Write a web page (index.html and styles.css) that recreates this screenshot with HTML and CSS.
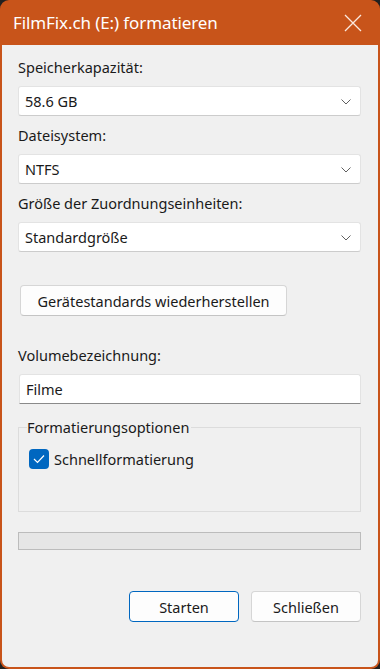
FILE: index.html
```html
<!DOCTYPE html>
<html lang="de">
<head>
  <meta charset="UTF-8">
  <meta name="viewport" content="width=device-width, initial-scale=1.0">
  <title>FilmFix.ch (E:) formatieren</title>
  <link rel="stylesheet" href="styles.css">
</head>
<body>

  <div class="window">
    <!-- Title bar -->
    <div class="titlebar">
      <span class="title">FilmFix.ch (E:) formatieren</span>
      <svg class="close" width="18" height="18" viewBox="0 0 18 18">
        <path d="M1 1 L17 17 M17 1 L1 17" stroke="#fbe9df" stroke-width="1.3" fill="none"/>
      </svg>
    </div>

    <div class="content">
      <label class="field-label">Speicherkapazität:</label>
      <div class="select">
        <span>58.6 GB</span>
        <svg class="chevron" width="10" height="6" viewBox="0 0 10 6"><path d="M0.5 0.5 L5 5 L9.5 0.5" stroke="#606060" stroke-width="1" fill="none"/></svg>
      </div>

      <label class="field-label">Dateisystem:</label>
      <div class="select">
        <span>NTFS</span>
        <svg class="chevron" width="10" height="6" viewBox="0 0 10 6"><path d="M0.5 0.5 L5 5 L9.5 0.5" stroke="#606060" stroke-width="1" fill="none"/></svg>
      </div>

      <label class="field-label">Größe der Zuordnungseinheiten:</label>
      <div class="select">
        <span>Standardgröße</span>
        <svg class="chevron" width="10" height="6" viewBox="0 0 10 6"><path d="M0.5 0.5 L5 5 L9.5 0.5" stroke="#606060" stroke-width="1" fill="none"/></svg>
      </div>

      <button class="btn restore-btn">Gerätestandards wiederherstellen</button>

      <label class="field-label volume-label">Volumebezeichnung:</label>
      <div class="textbox">Filme</div>

      <!-- Format options -->
      <fieldset class="options">
        <legend>Formatierungsoptionen</legend>
        <div class="check-row">
          <span class="checkbox">
            <svg width="12" height="10" viewBox="0 0 12 10"><path d="M1 5 L4.5 8.5 L11 1.5" stroke="#fff" stroke-width="1.2" fill="none"/></svg>
          </span>
          <span>Schnellformatierung</span>
        </div>
      </fieldset>

      <div class="progress"></div>

      <div class="actions">
        <button class="btn primary">Starten</button>
        <button class="btn">Schließen</button>
      </div>
    </div>
  </div>

</body>
</html>
```

FILE: styles.css
```css
body {
  margin: 0;
  padding: 0;
  background-color: #202020;
  font-family: "Noto Sans", "Open Sans", sans-serif;
  color: #1a1a1a;
}

.window {
  width: 376px;
  height: 667px;
  background-color: #c8541a;
  border-radius: 9px;
  padding: 0 2px 2px 2px;
  overflow: hidden;
}

.titlebar {
  height: 45px;
  display: flex;
  align-items: center;
  justify-content: space-between;
  padding: 0 16px 0 11px;
  color: #fff;
}

.title {
  font-size: 17px;
  letter-spacing: -0.1px;
  margin-top: -1px;
}

.close {
  margin-top: 1px;
}

.content {
  background-color: #f0f0f0;
  height: 622px;
  border-radius: 0 0 7px 7px;
  padding: 12px 17px 0 16px;
  display: flex;
  flex-direction: column;
  box-sizing: border-box;
}

.field-label {
  display: block;
  font-size: 14.5px;
  line-height: 20px;
  height: 20px;
  margin-bottom: 9px;
}

.select,
.textbox {
  height: 30px;
  box-sizing: border-box;
  background: #fff;
  border: 1px solid #e3e3e3;
  border-bottom-color: #cccccc;
  border-radius: 3px;
  display: flex;
  align-items: center;
  justify-content: space-between;
  padding: 0 9px 0 6px;
  font-size: 14.5px;
  margin-bottom: 9px;
}

.chevron {
  margin-top: 1px;
}

.btn {
  font-family: inherit;
  font-size: 14.5px;
  color: #1a1a1a;
  background: #fdfdfd;
  border: 1px solid #d6d6d6;
  border-bottom-color: #c4c4c4;
  border-radius: 4px;
  height: 31px;
  padding: 0;
  cursor: pointer;
}

.restore-btn {
  width: 267px;
  margin: 24px 0 0 2px;
  align-self: flex-start;
}

.volume-label {
  margin-top: 29px;
}

.textbox {
  border-bottom: 1px solid #8a8a8a;
  border-radius: 3px 3px 0 0;
  margin-left: 1px;
  margin-bottom: 0;
}

.options {
  margin: 13px 0 0 0;
  padding: 0 0 0 10px;
  border: 1px solid #dcdcdc;
  height: 95px;
  box-sizing: border-box;
}

.options legend {
  font-size: 14.5px;
  padding: 0 2px 0 0;
  margin-left: -2px;
  line-height: 20px;
}

.check-row {
  display: flex;
  align-items: center;
  gap: 5px;
  font-size: 14.5px;
  margin-top: 12px;
}

.checkbox {
  width: 20px;
  height: 20px;
  background: #0067c0;
  border-radius: 4px;
  display: flex;
  align-items: center;
  justify-content: center;
}

.progress {
  height: 18px;
  margin-top: 20px;
  background: #e6e6e6;
  border: 1px solid #bcbcbc;
  box-sizing: border-box;
}

.actions {
  display: flex;
  justify-content: flex-end;
  gap: 12px;
  margin-top: 41px;
}

.actions .btn {
  width: 110px;
  height: 31px;
}

.btn.primary {
  border: 1px solid #0067c0;
}
```
